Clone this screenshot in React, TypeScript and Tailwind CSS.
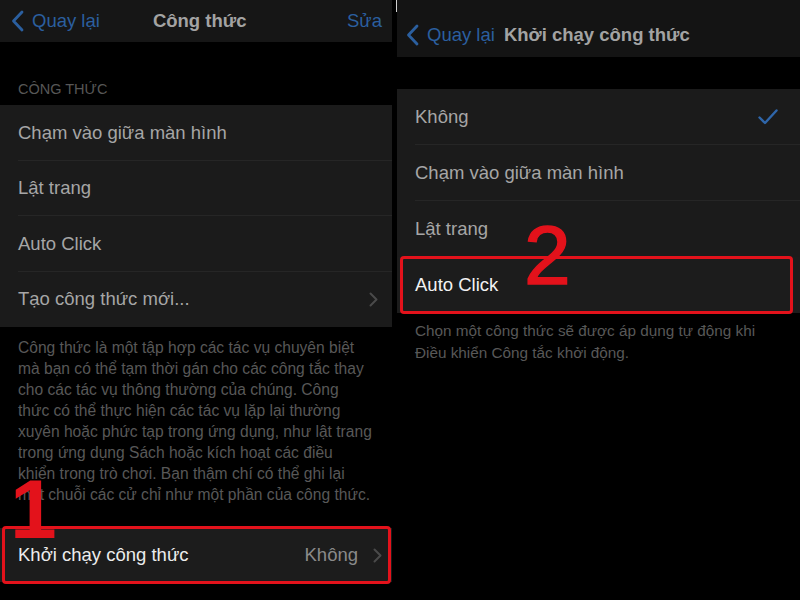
import React from 'react';

const font = { fontFamily: '"Liberation Sans", "Noto Sans", Arial, sans-serif' };

function Chevron({ className = '' }: { className?: string }) {
	return (
		<svg width="9" height="15" viewBox="0 0 9 15" className={className}>
			<path d="M1.5 1.5 L7.5 7.5 L1.5 13.5" fill="none" stroke="#4a4a4a" strokeWidth="2" strokeLinecap="round" strokeLinejoin="round" />
		</svg>
	);
}

function BackArrow() {
	return (
		<svg width="13" height="22" viewBox="0 0 13 22">
			<path d="M11 2 L2.5 11 L11 20" fill="none" stroke="#2b5f9f" strokeWidth="2.8" strokeLinecap="round" strokeLinejoin="round" />
		</svg>
	);
}

function Row({ label, last, children }: { label: string; last?: boolean; children?: React.ReactNode }) {
	return (
		<div className="relative flex h-[55.5px] items-center justify-between pl-[18px] pr-[14px]">
			<span className="text-[18.5px] text-[#a6a6a6]">{label}</span>
			{children}
			{!last && <div className="absolute bottom-0 left-[18px] right-0 h-px bg-[#262626]" />}
		</div>
	);
}

export default function App() {
	return (
		<div className="flex h-[600px] w-[800px] overflow-hidden bg-black" style={font}>
			{/* left screen */}
			<div className="relative flex w-[392px] flex-col">
				<div className="flex h-[42px] items-center bg-[#161616] pl-[11px] pr-[10px]">
					<div className="flex items-center gap-[8px]">
						<BackArrow />
						<span className="text-[18.5px] text-[#2b5f9f]">Quay lại</span>
					</div>
					<span className="ml-[53px] text-[18.5px] font-bold text-[#a3a3a3]">Công thức</span>
					<span className="ml-auto text-[18.5px] text-[#2b5f9f]">Sửa</span>
				</div>
				<div className="h-[37px]" />
				<div className="h-[26px] pl-[18px] text-[14.5px] text-[#575757]">CÔNG THỨC</div>
				<div className="bg-[#1b1b1b]">
					<Row label="Chạm vào giữa màn hình" />
					<Row label="Lật trang" />
					<Row label="Auto Click" />
					<Row label="Tạo công thức mới..." last>
						<Chevron />
					</Row>
				</div>
				<p className="whitespace-nowrap pl-[18px] pt-[10px] text-[15.6px] leading-[21px] text-[#585858]">
					Công thức là một tập hợp các tác vụ chuyên biệt
					<br />
					mà bạn có thể tạm thời gán cho các công tắc thay
					<br />
					cho các tác vụ thông thường của chúng. Công
					<br />
					thức có thể thực hiện các tác vụ lặp lại thường
					<br />
					xuyên hoặc phức tạp trong ứng dụng, như lật trang
					<br />
					trong ứng dụng Sách hoặc kích hoạt các điều
					<br />
					khiển trong trò chơi. Bạn thậm chí có thể ghi lại
					<br />
					một chuỗi các cử chỉ như một phần của công thức.
				</p>
				<div className="relative mt-[23px] flex h-[54px] items-center justify-between bg-[#1c1c1c] pl-[18px] pr-[10px]">
					<span className="text-[18.5px] text-[#ececec]">Khởi chạy công thức</span>
					<div className="flex items-center gap-[15px]">
						<span className="text-[18.5px] text-[#8a8a8a]">Không</span>
						<Chevron />
					</div>
					<div className="absolute -top-[2px] left-[2px] right-[1px] -bottom-[2px] rounded-[4px] border-[3px] border-[#e3121b]" />
				</div>
				<span className="absolute left-[10px] top-[467px] text-[84px] font-bold leading-none text-[#e3121b]">1</span>
			</div>

			{/* gap */}
			<div className="relative w-[5px]">
				<div className="absolute left-[4px] top-0 h-[12px] w-px bg-[#cfcfcf]" />
			</div>

			{/* right screen */}
			<div className="relative flex flex-1 flex-col">
				<div className="flex h-[57px] items-center bg-[#141414] pl-[9px] pt-[12px]">
					<BackArrow />
					<span className="ml-[8px] text-[18.5px] text-[#2b5f9f]">Quay lại</span>
					<span className="ml-[9px] text-[18.5px] font-bold text-[#a3a3a3]">Khởi chạy công thức</span>
				</div>
				<div className="h-[32px]" />
				<div className="bg-[#1b1b1b]">
					<div className="relative flex h-[56px] items-center justify-between pl-[18px] pr-[22px]">
						<span className="text-[18.5px] text-[#a6a6a6]">Không</span>
						<svg width="20" height="16" viewBox="0 0 20 16">
							<path d="M1.5 8.5 L7 14 L18.5 1.5" fill="none" stroke="#2f66aa" strokeWidth="2.4" strokeLinecap="round" strokeLinejoin="round" />
						</svg>
						<div className="absolute bottom-0 left-[18px] right-0 h-px bg-[#262626]" />
					</div>
					<div className="relative flex h-[56px] items-center pl-[18px]">
						<span className="text-[18.5px] text-[#a6a6a6]">Chạm vào giữa màn hình</span>
						<div className="absolute bottom-0 left-[18px] right-0 h-px bg-[#262626]" />
					</div>
					<div className="relative flex h-[56px] items-center pl-[18px]">
						<span className="text-[18.5px] text-[#a6a6a6]">Lật trang</span>
					</div>
					<div className="relative flex h-[56px] items-center bg-[#1c1c1c] pl-[18px]">
						<span className="text-[18.5px] text-[#f2f2f2]">Auto Click</span>
						<div className="absolute -top-[1px] left-[3px] right-[7px] -bottom-[1px] rounded-[4px] border-[3px] border-[#e3121b]" />
					</div>
				</div>
				<p className="whitespace-nowrap pl-[18px] pt-[7px] text-[15.3px] leading-[22px] text-[#585858]">
					Chọn một công thức sẽ được áp dụng tự động khi
					<br />
					Điều khiển Công tắc khởi động.
				</p>
				<span className="absolute left-[127px] top-[213px] text-[84px] leading-none text-[#e3121b]" style={{ WebkitTextStroke: '1.5px #e3121b' }}>2</span>
			</div>
		</div>
	);
}
